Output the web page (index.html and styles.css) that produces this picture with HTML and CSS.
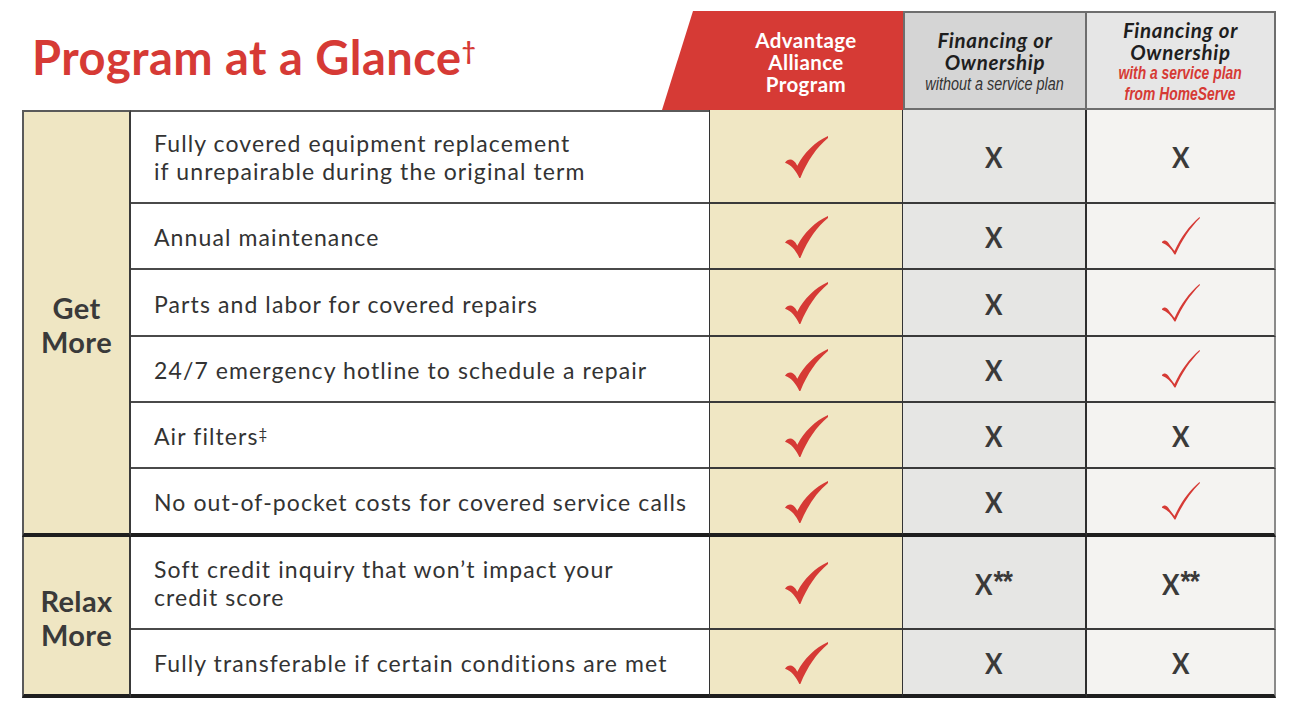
FILE: index.html
```html
<!DOCTYPE html>
<html lang="en">
<head>
<meta charset="utf-8">
<title>Program at a Glance</title>
<link rel="stylesheet" href="styles.css">
</head>
<body>
<svg class="defs" width="0" height="0" aria-hidden="true">
  <defs>
    <symbol id="chk-bold" viewBox="0 0 42 42">
      <path d="M0 27 C3 23 8 22 12 30 C19 17 29 7 42 1 L42 3 C31 12 22 25 15 42 L14 42 C11 35 6 29 0 27 Z"/>
    </symbol>
    <symbol id="chk-thin" viewBox="0 0 38 38">
      <path d="M0 25 C2 22.5 5 23 7.5 27.5 L12.5 34 C19 20 27 9 37.5 0 L38 1 C28 11 20 23 13.5 37.5 L12.5 37.5 C9 31.5 5 27.5 0 25.8 Z"/>
    </symbol>
  </defs>
</svg>
<div class="page">
  <div class="grid">
    <div class="title-cell"><h1 class="title">Program at a Glance<sup class="dagger">†</sup></h1></div>
    <div class="h-adv"><span>Advantage<br>Alliance<br>Program</span></div>
    <div class="h-fin">
      <span class="h-main">Financing or<br>Ownership</span>
      <span class="h-sub">without a service plan</span>
    </div>
    <div class="h-fin2">
      <span class="h-main">Financing or<br>Ownership</span>
      <span class="h-sub red">with a service plan<br>from HomeServe</span>
    </div>

    <div class="lbl lbl-get">Get<br>More</div>
    <div class="desc first two">Fully covered equipment replacement<br>if unrepairable during the original term</div>
    <div class="adv"><svg class="cb"><use href="#chk-bold"/></svg></div>
    <div class="c2"><span class="x">X</span></div>
    <div class="c3"><span class="x">X</span></div>

    <div class="desc">Annual maintenance</div>
    <div class="adv"><svg class="cb"><use href="#chk-bold"/></svg></div>
    <div class="c2"><span class="x">X</span></div>
    <div class="c3"><svg class="ct"><use href="#chk-thin"/></svg></div>

    <div class="desc">Parts and labor for covered repairs</div>
    <div class="adv"><svg class="cb"><use href="#chk-bold"/></svg></div>
    <div class="c2"><span class="x">X</span></div>
    <div class="c3"><svg class="ct"><use href="#chk-thin"/></svg></div>

    <div class="desc">24/7 emergency hotline to schedule a repair</div>
    <div class="adv"><svg class="cb"><use href="#chk-bold"/></svg></div>
    <div class="c2"><span class="x">X</span></div>
    <div class="c3"><svg class="ct"><use href="#chk-thin"/></svg></div>

    <div class="desc">Air filters<sup class="ddag">‡</sup></div>
    <div class="adv"><svg class="cb"><use href="#chk-bold"/></svg></div>
    <div class="c2"><span class="x">X</span></div>
    <div class="c3"><span class="x">X</span></div>

    <div class="desc thick">No out-of-pocket costs for covered service calls</div>
    <div class="adv thick"><svg class="cb"><use href="#chk-bold"/></svg></div>
    <div class="c2 thick"><span class="x">X</span></div>
    <div class="c3 thick"><svg class="ct"><use href="#chk-thin"/></svg></div>

    <div class="lbl lbl-relax">Relax<br>More</div>
    <div class="desc two">Soft credit inquiry that won’t impact your<br>credit score</div>
    <div class="adv"><svg class="cb"><use href="#chk-bold"/></svg></div>
    <div class="c2"><span class="x">X<span class="ast">**</span></span></div>
    <div class="c3"><span class="x">X<span class="ast">**</span></span></div>

    <div class="desc thick">Fully transferable if certain conditions are met</div>
    <div class="adv thick"><svg class="cb"><use href="#chk-bold"/></svg></div>
    <div class="c2 thick"><span class="x">X</span></div>
    <div class="c3 thick"><span class="x">X</span></div>
  </div>
</div>
</body>
</html>
```

FILE: styles.css
```css
* { box-sizing: border-box; }
html, body { margin: 0; padding: 0; background: #ffffff; }
body { font-family: "Lato", "Open Sans", sans-serif; color: #3a3a3a; }
.defs { position: absolute; width: 0; height: 0; overflow: hidden; }

.page { padding: 11px 0 0 22px; }

.grid {
  display: grid;
  grid-template-columns: 109px 578px 194px 184px 189px;
  grid-template-rows: 99px 94px 66px 67px 66px 66px 68px 93px 68px;
}

/* title */
.title-cell {
  grid-column: 1 / 3;
  grid-row: 1;
  padding: 20px 0 0 10px;
}
.title {
  margin: 0;
  font-size: 47px;
  line-height: 52px;
  font-weight: 700;
  color: #d63a35;
  letter-spacing: 0.5px;
}
.dagger { font-size: 24px; vertical-align: top; position: relative; top: -6px; margin-left: 0; }

/* headers */
.h-adv {
  grid-column: 3;
  grid-row: 1;
  position: relative;
  isolation: isolate;
  display: flex;
  align-items: center;
  justify-content: center;
  text-align: center;
  color: #ffffff;
  font-weight: 700;
  font-size: 20.5px;
  line-height: 22px;
  letter-spacing: 0.4px;
  padding-top: 2px;
}
.h-adv::before {
  content: "";
  position: absolute;
  top: 0; bottom: 0; right: 0; left: -47px;
  background: #d63a35;
  clip-path: polygon(31px 0, 100% 0, 100% 100%, 0 100%);
  z-index: -1;
}
.h-fin, .h-fin2 {
  grid-row: 1;
  display: flex;
  flex-direction: column;
  align-items: center;
  justify-content: center;
  text-align: center;
  border: 2px solid #6e6e6e;
  color: #1e1e1e;
}
.h-fin { grid-column: 4; background: #d5d5d5; padding-top: 3px; }
.h-fin2 { grid-column: 5; background: #e6e6e6; border-left: none; padding-top: 3px; }
.h-main {
  font-style: italic;
  font-weight: 700;
  font-size: 20.5px;
  line-height: 22px;
  letter-spacing: 0.7px;
}
.h-sub {
  display: inline-block;
  font-family: "Liberation Sans", "Arimo", sans-serif;
  font-style: italic;
  font-size: 18px;
  line-height: 22px;
  color: #333333;
  transform: scaleX(0.8);
  white-space: nowrap;
}
.h-sub.red { color: #d63a35; font-weight: 700; line-height: 21px; transform: scaleX(0.77); }

/* body cells */
.lbl {
  grid-column: 1;
  background: #efe6c3;
  border-left: 2px solid #5a5a5a;
  border-right: 2px solid #3a3a3a;
  border-bottom: 4px solid #1e1e1e;
  display: flex;
  align-items: center;
  justify-content: center;
  text-align: center;
  font-weight: 700;
  font-size: 29px;
  line-height: 34px;
  letter-spacing: 0.4px;
  color: #3a3a3a;
  padding-top: 4px;
}
.lbl-get { grid-row: 2 / 8; border-top: 2px solid #5a5a5a; }
.lbl-relax { grid-row: 8 / 10; }

.desc {
  grid-column: 2;
  display: flex;
  align-items: center;
  padding: 2px 0 0 23px;
  font-size: 23px;
  line-height: 28px;
  letter-spacing: 1.1px;
  color: #333333;
  border-bottom: 2px solid #4a4a4a;
  background: #ffffff;
}
.desc.two { line-height: 27.6px; }
.desc.first { border-top: 2px solid #5a5a5a; }
.ddag { font-size: 15px; vertical-align: top; position: relative; top: -3px; }

.adv, .c2, .c3 {
  display: flex;
  align-items: center;
  justify-content: center;
  border-bottom: 2px solid #3a3a3a;
}
.adv { grid-column: 3; background: #f0e7c4; border-left: 1px solid #333; border-right: 1px solid #333; }
.c2 { grid-column: 4; background: #e6e6e4; border-right: 2px solid #2e2e2e; }
.c3 { grid-column: 5; background: #f4f3f1; border-right: 2px solid #8a8a8a; }

.thick { border-bottom: 4px solid #1e1e1e; }

.cb { width: 43px; height: 43px; fill: #d63a35; }
.ct { width: 38px; height: 38px; fill: #d63a35; }
.x {
  font-weight: 700;
  font-size: 29px;
  line-height: 30px;
  color: #3a3a3a;
  padding-top: 2px;
  display: inline-block;
  transform: scaleX(0.9);
}
.ast {
  font-family: "Liberation Sans", sans-serif;
  font-size: 29px;
  line-height: 20px;
  vertical-align: top;
  position: relative;
  top: 2px;
  margin-left: 1px;
  letter-spacing: -1px;
}
```
